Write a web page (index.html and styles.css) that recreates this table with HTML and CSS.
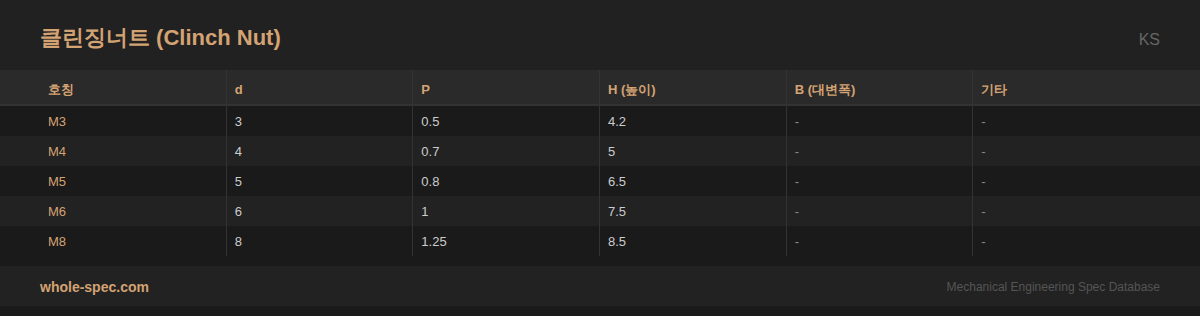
FILE: index.html
```html
<!DOCTYPE html>
<html lang="ko">
<head>
<meta charset="utf-8">
<link rel="stylesheet" href="styles.css">
</head>
<body>
<header class="top">
  <h1 class="title">클린징너트 (Clinch Nut)</h1>
  <span class="std">KS</span>
</header>
<div class="table">
  <div class="row head">
    <div class="cell">호칭</div><div class="cell">d</div><div class="cell">P</div><div class="cell">H (높이)</div><div class="cell">B (대변폭)</div><div class="cell">기타</div>
  </div>
  <div class="row">
    <div class="cell name">M3</div><div class="cell">3</div><div class="cell">0.5</div><div class="cell">4.2</div><div class="cell dash">-</div><div class="cell dash">-</div>
  </div>
  <div class="row alt">
    <div class="cell name">M4</div><div class="cell">4</div><div class="cell">0.7</div><div class="cell">5</div><div class="cell dash">-</div><div class="cell dash">-</div>
  </div>
  <div class="row">
    <div class="cell name">M5</div><div class="cell">5</div><div class="cell">0.8</div><div class="cell">6.5</div><div class="cell dash">-</div><div class="cell dash">-</div>
  </div>
  <div class="row alt">
    <div class="cell name">M6</div><div class="cell">6</div><div class="cell">1</div><div class="cell">7.5</div><div class="cell dash">-</div><div class="cell dash">-</div>
  </div>
  <div class="row">
    <div class="cell name">M8</div><div class="cell">8</div><div class="cell">1.25</div><div class="cell">8.5</div><div class="cell dash">-</div><div class="cell dash">-</div>
  </div>
</div>
<footer class="foot">
  <span class="site">whole-spec.com</span>
  <span class="tag">Mechanical Engineering Spec Database</span>
</footer>
</body>
</html>
```

FILE: styles.css
```css
* { box-sizing: border-box; }
html, body { margin: 0; padding: 0; }
body {
  background: #1a1a1a;
  font-family: "Liberation Sans", sans-serif;
  color: #cccccc;
  width: 1200px;
  height: 316px;
  overflow: hidden;
}
.top {
  background: #212121;
  height: 70px;
  padding: 6px 40px 0;
  display: flex;
  align-items: center;
  justify-content: space-between;
}
.title {
  margin: 0;
  font-size: 22px;
  font-weight: bold;
  color: #d4a373;
  line-height: 26px;
}
.std {
  font-size: 16px;
  color: #666666;
  padding-top: 4px;
}
.table { display: flex; flex-direction: column; }
.row {
  display: grid;
  grid-template-columns: repeat(6, 1fr);
  padding: 0 40px;
  height: 30px;
  background: #1a1a1a;
}
.row.alt { background: #222222; }
.row.head {
  background: #2a2a2a;
  height: 36px;
  border-bottom: 2px solid #333333;
}
.cell {
  display: flex;
  align-items: center;
  padding-left: 8px;
  font-size: 13px;
  color: #cccccc;
  border-right: 1px solid #333333;
}
.cell:last-child { border-right: none; }
.head .cell {
  color: #d4a373;
  font-weight: bold;
  padding-top: 5px;
}
.cell.name { color: #d4a373; }
.cell.dash { color: #888888; }
.foot {
  margin-top: 10px;
  height: 40px;
  background: #222222;
  padding: 2px 40px 0;
  display: flex;
  align-items: center;
  justify-content: space-between;
}
.site {
  font-size: 14px;
  font-weight: bold;
  color: #d4a373;
}
.tag {
  font-size: 12px;
  color: #555555;
}
```
